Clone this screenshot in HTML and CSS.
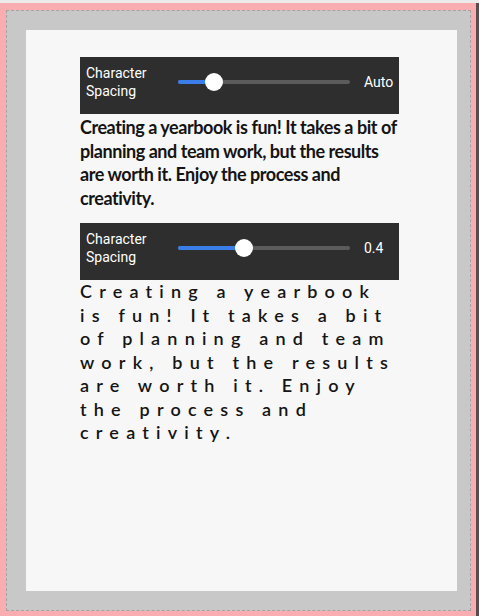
FILE: index.html
```html
<!DOCTYPE html>
<html lang="en">
<head>
    <meta charset="UTF-8">
    <meta name="viewport" content="width=device-width, initial-scale=1.0">
    <title>Character Spacing</title>
    <link rel="stylesheet" href="styles.css">
</head>
<body>

    <div class="frame">
        <div class="stage">
            <div class="page">

                <div class="control">
                    <div class="control-label">Character Spacing</div>
                    <div class="slider">
                        <div class="slider-fill" style="width: 36px;"></div>
                        <div class="slider-thumb" style="left: 36px;"></div>
                    </div>
                    <div class="control-value">Auto</div>
                </div>
                <p class="sample">Creating a yearbook is fun! It takes a bit of planning and team work, but the results are worth it. Enjoy the process and creativity.</p>

                <div class="control">
                    <div class="control-label">Character Spacing</div>
                    <div class="slider">
                        <div class="slider-fill" style="width: 66px;"></div>
                        <div class="slider-thumb" style="left: 66px;"></div>
                    </div>
                    <div class="control-value">0.4</div>
                </div>
                <p class="sample sample-spaced">Creating a yearbook is fun! It takes a bit of planning and team work, but the results are worth it. Enjoy the process and creativity.</p>

            </div>
        </div>
    </div>

</body>
</html>
```

FILE: styles.css
```css
html {
    background-color: #ebebeb;
}

body {
    margin: 0;
    padding-top: 3px;
    font-family: Roboto, "Noto Sans", sans-serif;
}

.frame {
    background-color: #f9adb0;
    padding: 7px 5px 5px 6px;
    border-right: 3px solid #5a4c4e;
    height: 613px;
    box-sizing: border-box;
}

.stage {
    background-color: #c8c8c8;
    border: 1px dashed #a9a0a1;
    padding: 19px;
    height: 100%;
    box-sizing: border-box;
}

.page {
    width: 431px;
    height: 561px;
    background-color: #f7f7f7;
    padding: 27px 0 0 54px;
    box-sizing: border-box;
}

.control {
    width: 319px;
    box-sizing: border-box;
    background-color: #2e2e2e;
    color: #fff;
    display: flex;
    align-items: center;
    padding: 7px 0 14px 6px;
}

.control-label {
    width: 82px;
    font-size: 14px;
    line-height: 18px;
}

.slider {
    position: relative;
    width: 172px;
    height: 4px;
    margin-left: 10px;
    border-radius: 2px;
    background-color: #5b5b5b;
}

.slider-fill {
    height: 100%;
    border-radius: 2px;
    background-color: #3b7de9;
}

.slider-thumb {
    position: absolute;
    top: 50%;
    width: 18px;
    height: 18px;
    margin: -9px 0 0 -9px;
    border-radius: 50%;
    background-color: #fff;
}

.control-value {
    margin-left: 14px;
    font-size: 14px;
}

.sample {
    width: 322px;
    margin: 2px 0 13px;
    font-family: Lato, sans-serif;
    font-weight: 700;
    font-size: 18px;
    line-height: 23.5px;
    letter-spacing: -0.45px;
    color: #141414;
}

.sample-spaced {
    margin-top: 0;
    font-weight: 600;
    letter-spacing: 0.4em;
}
```
